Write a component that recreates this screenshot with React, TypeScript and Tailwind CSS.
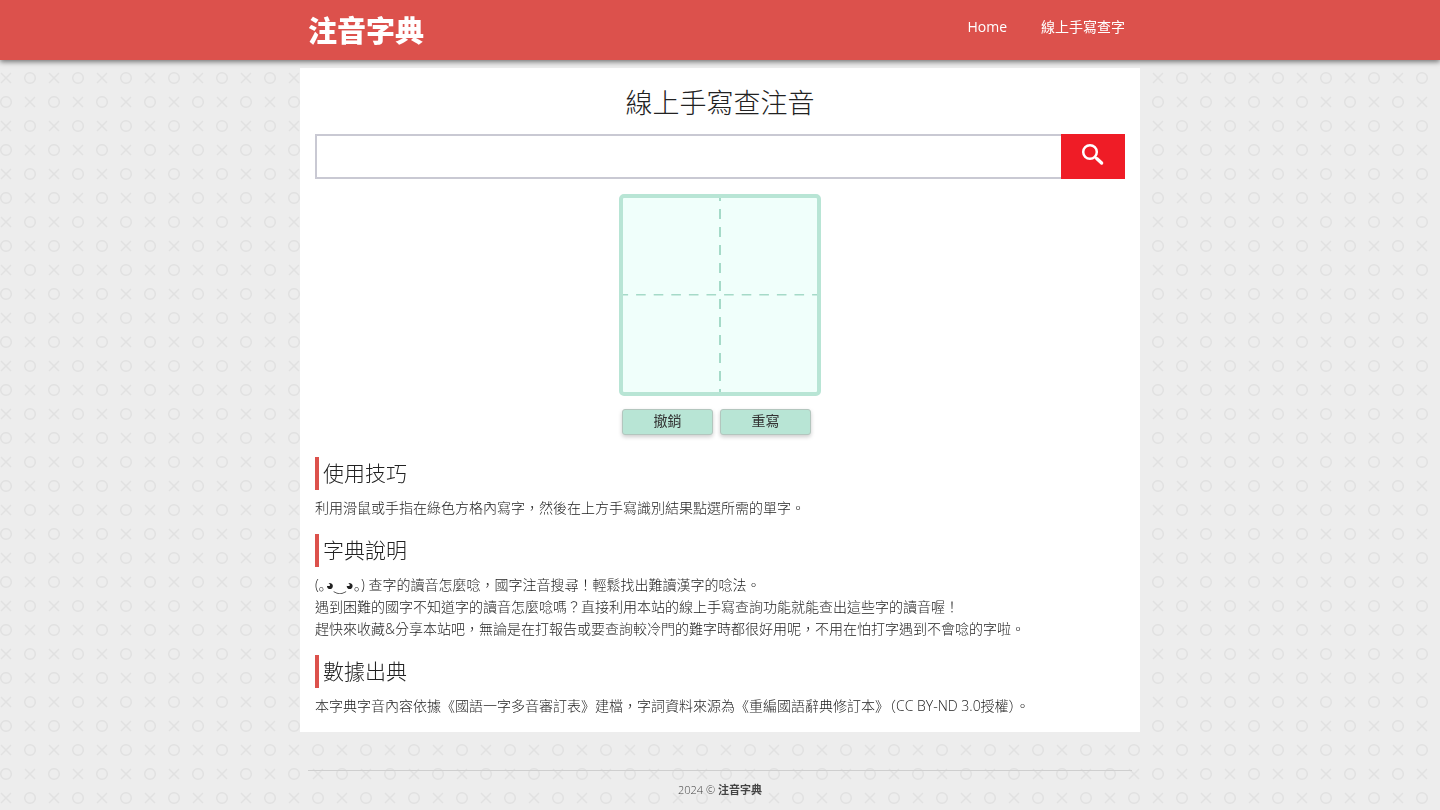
import { useState } from "react";

type Point = [number, number];

const sections = [
  {
    title: "使用技巧",
    lines: ["利用滑鼠或手指在綠色方格內寫字，然後在上方手寫識別結果點選所需的單字。"],
  },
  {
    title: "字典說明",
    face: "(｡◕‿◕｡)",
    lines: [
      " 查字的讀音怎麼唸，國字注音搜尋！輕鬆找出難讀漢字的唸法。",
      "遇到困難的國字不知道字的讀音怎麼唸嗎？直接利用本站的線上手寫查詢功能就能查出這些字的讀音喔！",
      "趕快來收藏&分享本站吧，無論是在打報告或要查詢較冷門的難字時都很好用呢，不用在怕打字遇到不會唸的字啦。",
    ],
  },
  {
    title: "數據出典",
    lines: [
      "本字典字音內容依據《國語一字多音審訂表》建檔，字詞資料來源為《重編國語辭典修訂本》（CC BY-ND 3.0授權）。",
    ],
  },
];

function PageBackground() {
  return (
    <svg className="fixed inset-0 -z-10 h-full w-full" aria-hidden="true">
      <defs>
        <pattern id="xo" width="48" height="48" patternUnits="userSpaceOnUse">
          <g fill="none" stroke="#e1e1e1" strokeWidth="1.5">
            <circle cx="6" cy="6" r="5.3" />
            <circle cx="30" cy="30" r="5.3" />
            <path d="M25 1l10 10M35 1L25 11M1 25l10 10M11 25L1 35" />
          </g>
        </pattern>
      </defs>
      <rect width="100%" height="100%" fill="#ededed" />
      <rect width="100%" height="100%" fill="url(#xo)" />
    </svg>
  );
}

function Header() {
  return (
    <header className="relative z-10 bg-[#dc514c] text-white shadow-[0_2px_5px_rgba(0,0,0,0.5)]">
      <div className="mx-auto flex h-[60px] max-w-[824px] items-center justify-between">
        <a href="/" className="text-[29px] leading-none font-black">
          注音字典
        </a>
        <nav className="flex gap-[34px] pr-[7px] pb-2 text-[14px] font-normal">
          <a href="/">Home</a>
          <a href="/write">線上手寫查字</a>
        </nav>
      </div>
    </header>
  );
}

function SearchBar() {
  return (
    <form className="mt-3 flex h-[45px]" onSubmit={(e) => e.preventDefault()}>
      <input
        type="text"
        aria-label="查字"
        className="min-w-0 flex-1 border-2 border-r-0 border-[#c9c9d3] bg-white px-3 text-[21px] outline-none"
      />
      <button type="submit" aria-label="搜尋" className="flex w-16 justify-center bg-[#ef1c26] pt-[9px]">
        <svg className="size-6" viewBox="0 0 24 24" fill="none" stroke="#fff">
          <circle cx="9" cy="9" r="6.8" strokeWidth="2.5" />
          <path d="M13.5 13.5l2.5 2.5" strokeWidth="2.4" />
          <path d="M16 15.8l4.6 4.2" strokeWidth="3.4" strokeLinecap="round" />
        </svg>
      </button>
    </form>
  );
}

function WritingPad() {
  const [strokes, setStrokes] = useState<Point[][]>([]);
  const [drawing, setDrawing] = useState(false);

  const toPoint = (e: React.PointerEvent<SVGSVGElement>): Point => {
    const box = e.currentTarget.getBoundingClientRect();
    return [e.clientX - box.left, e.clientY - box.top];
  };

  const start = (e: React.PointerEvent<SVGSVGElement>) => {
    setDrawing(true);
    setStrokes([...strokes, [toPoint(e)]]);
  };

  const move = (e: React.PointerEvent<SVGSVGElement>) => {
    if (!drawing) return;
    const p = toPoint(e);
    setStrokes((prev) => [...prev.slice(0, -1), [...prev[prev.length - 1], p]]);
  };

  const buttonClass =
    "h-[26px] w-[91px] cursor-pointer rounded-[3px] border border-[#b3c6be] bg-[#b8e5d5] pb-0.5 text-[14px] leading-none font-normal text-[#333] shadow-[0_2px_4px_rgba(0,0,0,0.2)]";

  return (
    <div className="mt-[15px] flex flex-col items-center">
      <div className="size-[202px] rounded-[5px] border-4 border-[#b8e5d5] bg-[#f0fffb]">
        <svg
          className="block h-full w-full touch-none"
          viewBox="0 0 194 194"
          fill="none"
          onPointerDown={start}
          onPointerMove={move}
          onPointerUp={() => setDrawing(false)}
          onPointerLeave={() => setDrawing(false)}
        >
          <path d="M97 0v194" stroke="#a5dac8" strokeWidth="2" strokeDasharray="10 8" strokeDashoffset="7" />
          <path d="M0 96.7h194" stroke="#a5dac8" strokeWidth="1.4" strokeDasharray="9.6 8" strokeDashoffset="4.5" />
          {strokes.map((s, i) => (
            <polyline
              key={i}
              points={s.map((p) => p.join(",")).join(" ")}
              stroke="#333"
              strokeWidth="5"
              strokeLinecap="round"
              strokeLinejoin="round"
            />
          ))}
        </svg>
      </div>
      <div className="mt-[13px] flex gap-[7px] pr-[7px]">
        <button type="button" className={buttonClass} onClick={() => setStrokes(strokes.slice(0, -1))}>
          撤銷
        </button>
        <button type="button" className={buttonClass} onClick={() => setStrokes([])}>
          重寫
        </button>
      </div>
    </div>
  );
}

export default function App() {
  return (
    <div
      lang="zh-TW"
      className="relative isolate min-h-screen font-['Open_Sans','Noto_Sans_CJK_TC',sans-serif] font-light text-[#222]"
    >
      <PageBackground />
      <Header />

      <main className="mx-auto mt-2 max-w-[840px] bg-white px-[15px] pt-4 pb-[15px]">
        <h1 className="text-center text-[27px] leading-[38px]">線上手寫查注音</h1>
        <SearchBar />
        <WritingPad />

        <div className="mt-[22px] flex flex-col gap-[15px]">
          {sections.map((section) => (
            <section key={section.title}>
              <h2 className="border-l-4 border-[#dc514c] pl-1 text-[21px] leading-[33px]">{section.title}</h2>
              <p className="mt-[7px] text-[14px] leading-[22px]">
                {section.lines.map((line, i) => (
                  <span key={line} className="block">
                    {i === 0 && section.face && (
                      <span className="font-['Open_Sans','DejaVu_Sans','Noto_Sans_CJK_TC',sans-serif]">
                        {section.face}
                      </span>
                    )}
                    {line}
                  </span>
                ))}
              </p>
            </section>
          ))}
        </div>
      </main>

      <footer className="mx-auto mt-[38px] max-w-[824px] border-t border-[#cfcfcf] pt-2.5 text-center text-[11px] leading-[18px] text-[#444]">
        2024 © <strong className="font-bold">注音字典</strong>
      </footer>
    </div>
  );
}
